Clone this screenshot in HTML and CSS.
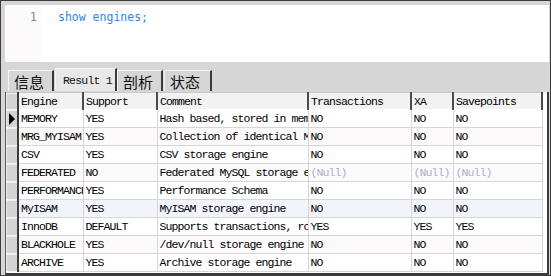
FILE: index.html
```html
<!DOCTYPE html>
<html lang="zh">
<head>
  <meta charset="UTF-8" />
  <title>show engines</title>
  <link rel="stylesheet" href="styles.css">
</head>
<body>
  <div class="window">
    <div class="editor">
      <div class="gutter">1</div>
      <div class="code">show engines;</div>
    </div>

    <div class="tabs">
      <div class="tab t-info">信息</div>
      <div class="tab active">Result 1</div>
      <div class="tab t-prof">剖析</div>
      <div class="tab t-stat">状态</div>
    </div>

    <div class="grid">
      <table>
        <colgroup>
          <col class="c-ind"><col class="c-engine"><col class="c-support"><col class="c-comment">
          <col class="c-trans"><col class="c-xa"><col class="c-save">
        </colgroup>
        <thead><tr>
          <th class="ind"></th><th>Engine</th><th>Support</th><th>Comment</th>
          <th>Transactions</th><th>XA</th><th>Savepoints</th>
        </tr></thead>
        <tbody>
          <tr><td class="ind current"><span class="arrow"></span></td><td>MEMORY</td><td>YES</td><td>Hash based, stored in memory, useful for temporary tables</td><td>NO</td><td>NO</td><td>NO</td></tr>
          <tr class="alt"><td class="ind"></td><td>MRG_MYISAM</td><td>YES</td><td>Collection of identical MyISAM tables</td><td>NO</td><td>NO</td><td>NO</td></tr>
          <tr><td class="ind"></td><td>CSV</td><td>YES</td><td>CSV storage engine</td><td>NO</td><td>NO</td><td>NO</td></tr>
          <tr class="alt"><td class="ind"></td><td>FEDERATED</td><td>NO</td><td>Federated MySQL storage engine</td><td class="null">(Null)</td><td class="null">(Null)</td><td class="null">(Null)</td></tr>
          <tr><td class="ind"></td><td>PERFORMANCE_SCHEMA</td><td>YES</td><td>Performance Schema</td><td>NO</td><td>NO</td><td>NO</td></tr>
          <tr class="hover"><td class="ind"></td><td>MyISAM</td><td>YES</td><td>MyISAM storage engine</td><td>NO</td><td>NO</td><td>NO</td></tr>
          <tr><td class="ind"></td><td>InnoDB</td><td>DEFAULT</td><td>Supports transactions, row-level locking, and foreign keys</td><td>YES</td><td>YES</td><td>YES</td></tr>
          <tr class="alt"><td class="ind"></td><td>BLACKHOLE</td><td>YES</td><td>/dev/null storage engine (anything you write to it disappears)</td><td>NO</td><td>NO</td><td>NO</td></tr>
          <tr><td class="ind"></td><td>ARCHIVE</td><td>YES</td><td>Archive storage engine</td><td>NO</td><td>NO</td><td>NO</td></tr>
        </tbody>
      </table>
    </div>
  </div>
</body>
</html>
```

FILE: styles.css
```css
body { margin: 0; background: #d6d6d6; }
.window {
  width: 551px; height: 276px; box-sizing: border-box;
  border: 1px solid #3c3c3c; background: #d6d6d6;
  padding: 4px 1px 0 4px; display: flex; flex-direction: column;
}

/* editor */
.editor { height: 57px; display: flex; background: #fff; }
.gutter {
  width: 36px; box-sizing: border-box; padding: 5px 4px 0 0; text-align: right;
  background: #fdfafc; color: #8a8a8a;
  font: 12px "DejaVu Sans Mono", monospace;
}
.code {
  padding: 5px 0 0 17px; color: #2a86e8;
  font: 11.5px "DejaVu Sans Mono", monospace;
}

/* tabs */
.tabs { height: 29px; display: flex; align-items: flex-end; padding-left: 3px; }
.tab {
  height: 21px; box-sizing: border-box; padding: 2px 0 0 5px;
  border-left: 1px solid #f4f4f4; border-top: 1px solid #f4f4f4;
  border-right: 2px solid #3a3a3a; background: #d6d6d6;
  font: 15px "Noto Sans CJK SC", sans-serif; line-height: 17px; color: #111;
}
.t-info { width: 46px; }
.t-prof { width: 46px; }
.t-stat { width: 48px; margin-left: 1px; }
.tab.active {
  width: 62px; height: 23px; background: #e8e8e8; padding: 4px 0 0 7px; margin-left: 1px;
  font: 11.5px "Liberation Mono", monospace; letter-spacing: -0.8px; line-height: 16px;
}

/* grid */
.grid {
  flex: 1; background: #fff; border-left: 1px solid #5a5a5a;
  border-right: 2px solid #3c3c3c; border-bottom: 2px solid #3c3c3c;
  overflow: hidden; margin-top: 1px;
}
table {
  table-layout: fixed; border-collapse: collapse; width: 536px;
  font: 11.5px "Liberation Mono", monospace; letter-spacing: -0.9px; color: #000;
}
.c-ind { width: 12px; } .c-engine { width: 65px; } .c-support { width: 74px; }
.c-comment { width: 151px; } .c-trans { width: 103px; } .c-xa { width: 42px; }
.c-save { width: 89px; }
th, td {
  height: 17px; padding: 0 0 0 2px; text-align: left; white-space: nowrap;
  overflow: hidden; font-weight: normal;
}
th {
  background: #f2f2f2; border-right: 2px solid #4a4a4a; border-top: 1px solid #c8c8c8;
  border-bottom: 1px solid #fff; height: 16px;
}
td { border-right: 1px solid #d6d6d6; border-bottom: 1px solid #d6d6d6; }
td.ind, th.ind {
  padding: 0; background: #d4d4d4; border-right: 2px solid #3c3c3c;
  border-bottom: 1px solid #f4f4f4; box-shadow: inset 1px 1px 0 #eee;
}
tr.alt td { background: #fcf9fb; }
tr.hover td { background: #f1f5fb; }
tr.alt td.ind, tr.hover td.ind { background: #d4d4d4; }
td.null { color: #a9b0d0; }
.arrow {
  display: block; width: 0; height: 0; margin-left: 3px;
  border-top: 6px solid transparent; border-bottom: 6px solid transparent;
  border-left: 6px solid #000;
}
```
